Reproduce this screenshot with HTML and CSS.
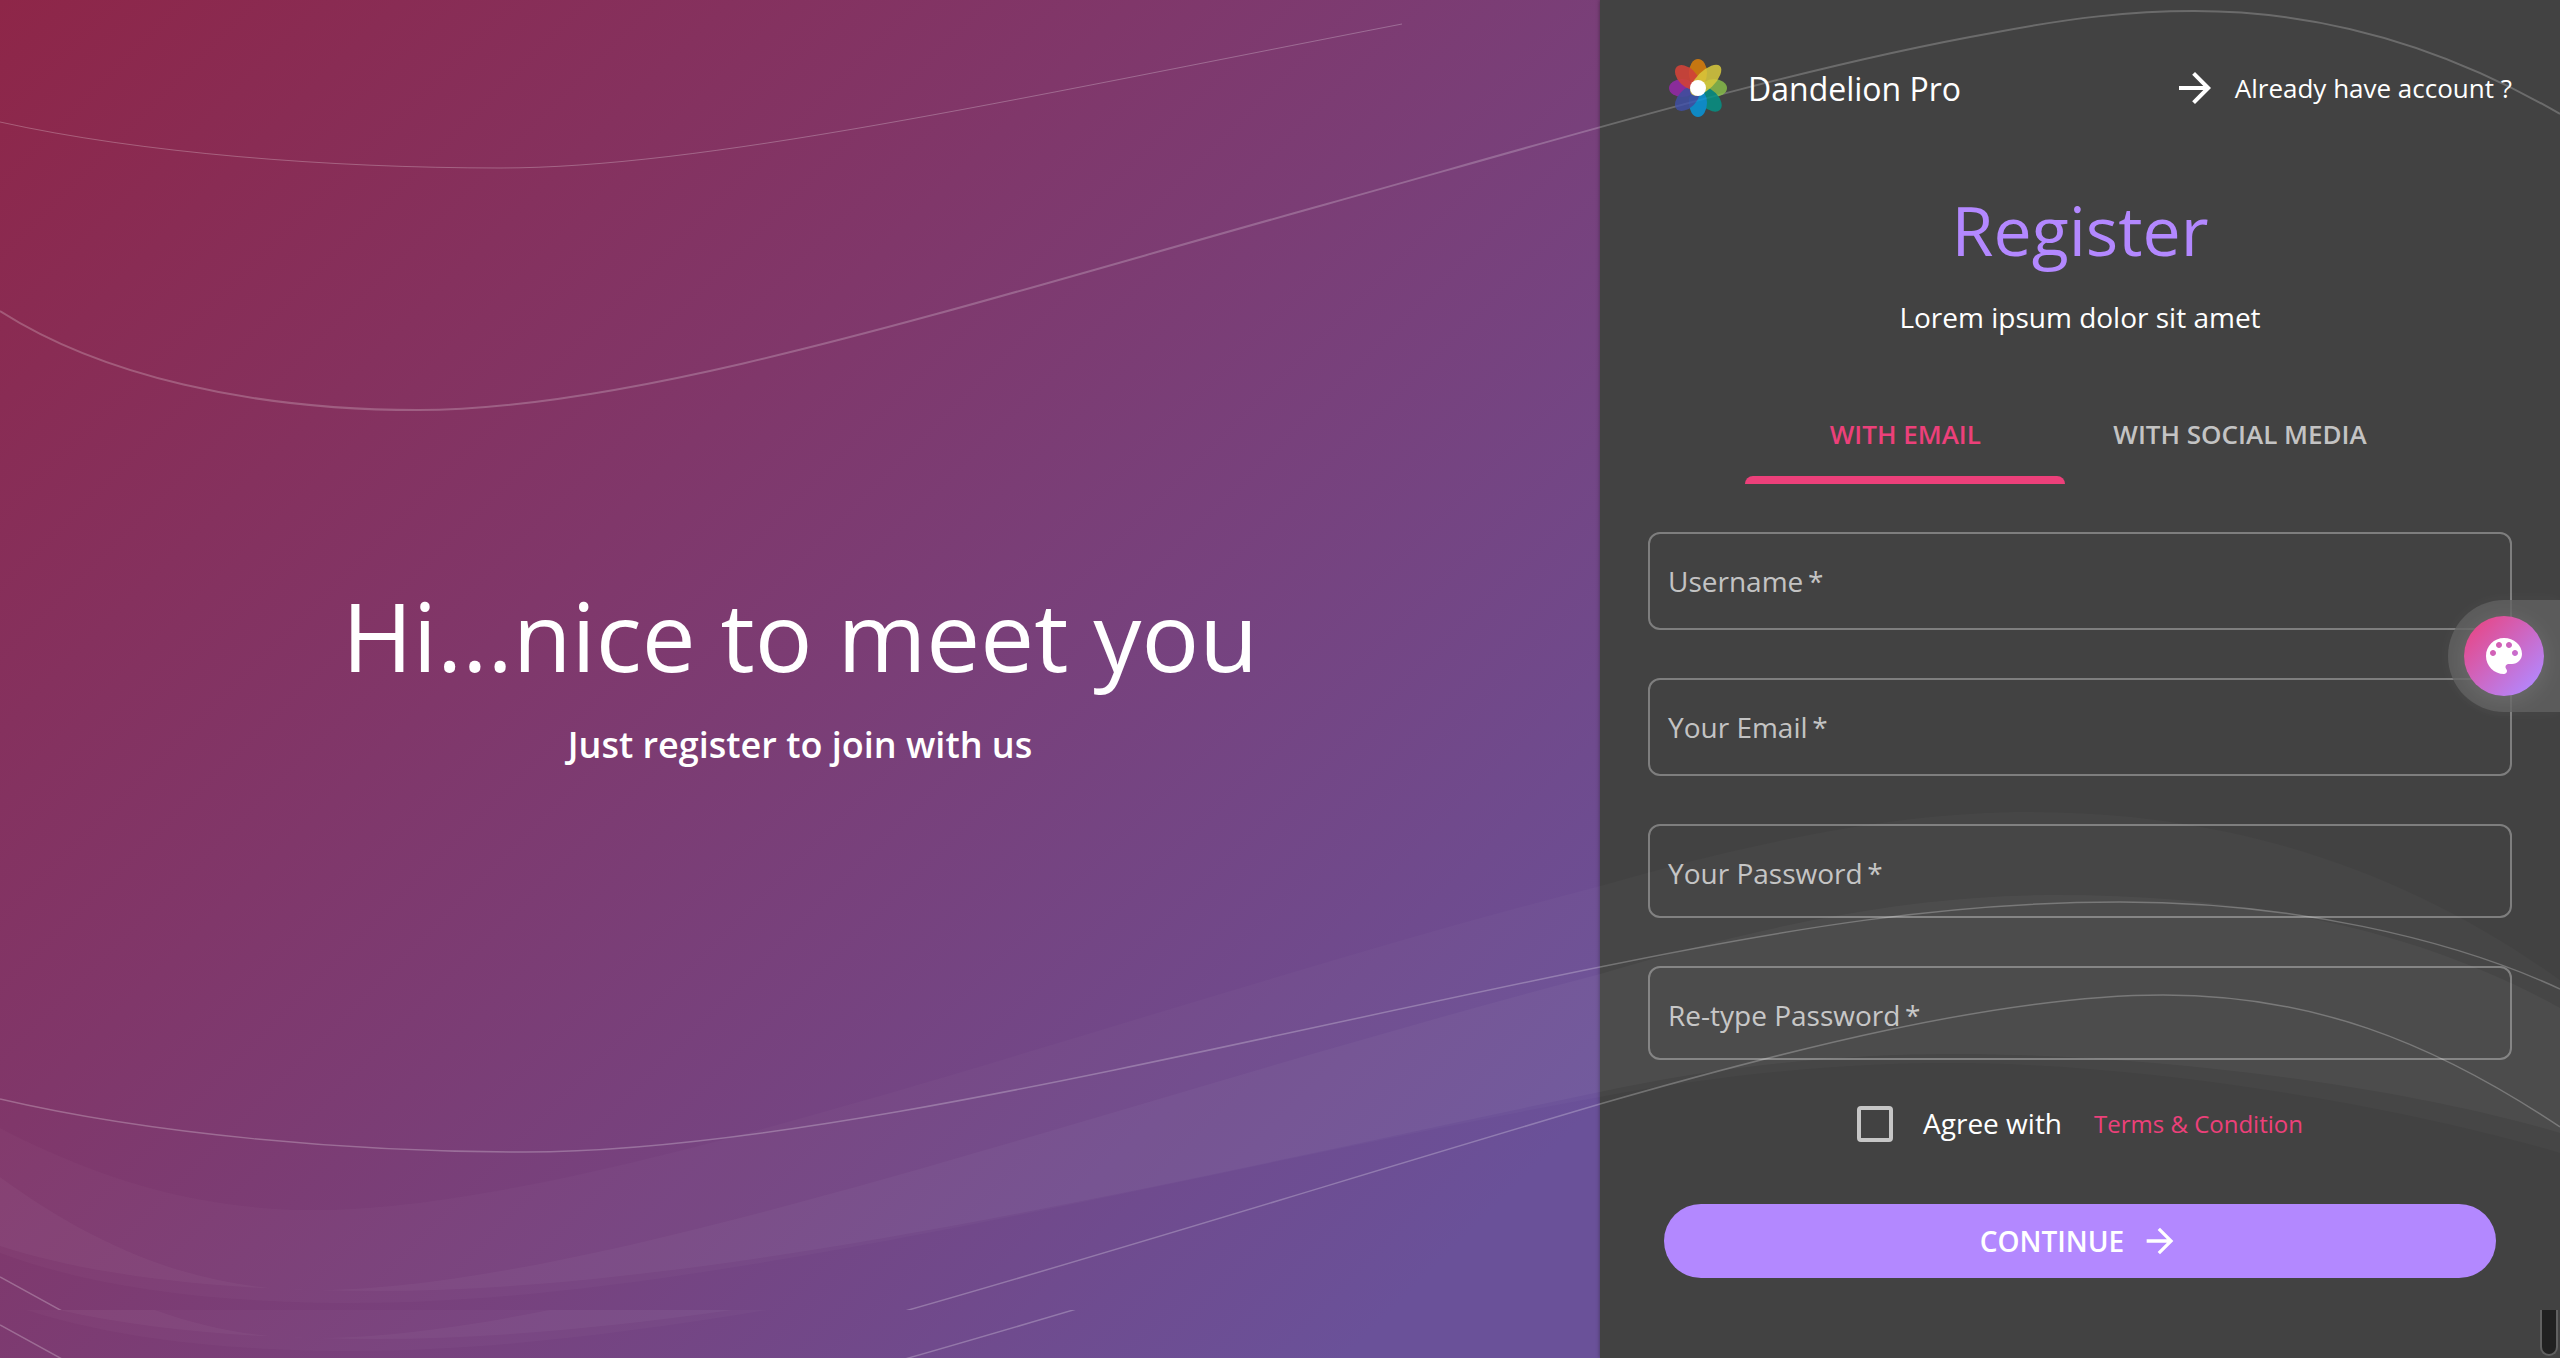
FILE: index.html
```html
<!DOCTYPE html>
<html lang="en">
<head>
    <meta charset="UTF-8">
    <meta name="viewport" content="width=device-width, initial-scale=1.0">
    <title>Dandelion Pro - Register</title>
    <link rel="stylesheet" href="styles.css">
</head>
<body>

    <div class="page">
        <!-- Background waves -->
        <svg class="waves" viewBox="0 0 2560 1358" preserveAspectRatio="none" aria-hidden="true">
            <defs>
                <clipPath id="clip-main"><rect width="2560" height="1310"/></clipPath>
                <clipPath id="clip-tail"><rect y="1262" width="2560" height="48"/></clipPath>
                <g id="wave-shapes">
                    <path class="band-soft" d="M0 1128 C100 1180 200 1210 314 1210 C600 1210 1120 1010 1600 886 C1760 840 1900 812 2029 812 C2250 812 2420 880 2560 980 L2560 1153 C2380 1100 2130 1063 1949 1063 C1840 1063 1720 1075 1600 1097 C1180 1174 700 1303 357 1303 C220 1303 100 1290 0 1253 Z"/>
                    <path class="band" d="M0 1177 C100 1250 200 1290 314 1290 C600 1290 1120 1099 1600 974 C1780 920 1920 895 2059 895 C2250 895 2420 930 2560 1008 L2560 1133 C2380 1080 2130 1054 1955 1054 C1840 1054 1720 1066 1600 1092 C1180 1180 720 1291 378 1291 C230 1291 100 1278 0 1246 Z"/>
                    <path class="line" d="M0 1099 C150 1134 350 1152 525 1152 C800 1152 1220 1044 1600 967 C1790 928 1950 902 2120 902 C2290 902 2450 938 2560 989"/>
                    <path class="line" d="M0 1277 L62 1311 M905 1311 C1130 1247 1350 1178 1600 1104 C1780 1052 2000 995 2163 995 C2310 995 2430 1040 2560 1127"/>
                </g>
            </defs>
            <path class="line line-thin" d="M0 122 C140 153 330 168 500 168 C700 168 1000 102 1402 24"/>
            <path class="line line-bold" d="M0 311 C100 375 250 410 418 410 C640 410 960 306 1327 204 C1580 133 1800 67 1992 33 C2070 18 2130 11 2194 11 C2330 11 2450 50 2560 114"/>
            <g clip-path="url(#clip-main)"><use href="#wave-shapes"/></g>
            <g transform="translate(0 48)"><g clip-path="url(#clip-tail)"><use href="#wave-shapes"/></g></g>
        </svg>

        <section class="welcome">
            <h1>Hi...nice to meet you</h1>
            <p>Just register to join with us</p>
        </section>

        <main class="panel">
            <header class="topbar">
                <a class="brand" href="#">
                    <svg class="logo" viewBox="-30 -30 60 60" aria-hidden="true">
                        <g opacity="0.8">
                            <ellipse cx="16" cy="0" rx="13" ry="9" fill="#8bc34a"/>
                            <ellipse cx="16" cy="0" rx="15" ry="9" fill="#009688" transform="rotate(45)"/>
                            <ellipse cx="15" cy="0" rx="14" ry="9" fill="#039be5" transform="rotate(90)"/>
                            <ellipse cx="-16" cy="0" rx="13" ry="9" fill="#9c27b0"/>
                            <ellipse cx="15" cy="0" rx="15" ry="9" fill="#3f51b5" fill-opacity="0.9" transform="rotate(135)"/>
                            <ellipse cx="15" cy="0" rx="14" ry="9" fill="#fb8c00" fill-opacity="0.9" transform="rotate(270)"/>
                            <ellipse cx="15" cy="0" rx="15" ry="9" fill="#f44336" fill-opacity="0.9" transform="rotate(225)"/>
                            <ellipse cx="11" cy="0" rx="20" ry="9" fill="#ffeb3b" fill-opacity="0.85" transform="rotate(315)"/>
                        </g>
                        <circle r="8" fill="#fff"/>
                    </svg>
                    Dandelion Pro
                </a>
                <a class="login-link" href="#">
                    <svg class="icon" viewBox="0 0 24 24" aria-hidden="true"><path d="M12 4l-1.41 1.41L16.17 11H4v2h12.17l-5.58 5.59L12 20l8-8z"/></svg>
                    Already have account ?
                </a>
            </header>

            <h2>Register</h2>
            <p class="subtitle">Lorem ipsum dolor sit amet</p>

            <div class="tabs" role="tablist">
                <button class="tab active" type="button" role="tab" aria-selected="true">WITH EMAIL</button>
                <button class="tab" type="button" role="tab" aria-selected="false">WITH SOCIAL MEDIA</button>
            </div>

            <form class="form">
                <div class="field">
                    <input type="text" id="username" placeholder=" " required>
                    <label for="username">Username&thinsp;*</label>
                </div>
                <div class="field">
                    <input type="email" id="email" placeholder=" " required>
                    <label for="email">Your Email&thinsp;*</label>
                </div>
                <div class="field field-password">
                    <input type="password" id="password" placeholder=" " required>
                    <label for="password">Your Password&thinsp;*</label>
                </div>
                <div class="field field-password">
                    <input type="password" id="password-repeat" placeholder=" " required>
                    <label for="password-repeat">Re-type Password&thinsp;*</label>
                </div>

                <div class="agree">
                    <input type="checkbox" id="agree">
                    <label for="agree">Agree with</label>
                    <a href="#">Terms &amp; Condition</a>
                </div>

                <button class="submit" type="submit">
                    CONTINUE
                    <svg class="icon" viewBox="0 0 24 24" aria-hidden="true"><path d="M12 4l-1.41 1.41L16.17 11H4v2h12.17l-5.58 5.59L12 20l8-8z"/></svg>
                </button>
            </form>
        </main>

        <!-- Theme switcher stuck to the right edge -->
        <div class="theme-toggle">
            <button type="button" aria-label="Change theme">
                <svg class="icon" viewBox="0 0 24 24" aria-hidden="true"><path d="M12 3c-4.97 0-9 4.03-9 9s4.03 9 9 9c.83 0 1.5-.67 1.5-1.5 0-.39-.15-.74-.39-1.01-.23-.26-.38-.61-.38-.99 0-.83.67-1.5 1.5-1.5H16c2.76 0 5-2.24 5-5 0-4.42-4.03-8-9-8zm-5.5 9c-.83 0-1.5-.67-1.5-1.5S5.67 9 6.5 9 8 9.67 8 10.5 7.33 12 6.5 12zm3-4C8.67 8 8 7.33 8 6.5S8.67 5 9.5 5s1.5.67 1.5 1.5S10.33 8 9.5 8zm5 0c-.83 0-1.5-.67-1.5-1.5S13.67 5 14.5 5s1.5.67 1.5 1.5S15.33 8 14.5 8zm3 4c-.83 0-1.5-.67-1.5-1.5S16.67 9 17.5 9s1.5.67 1.5 1.5-.67 1.5-1.5 1.5z"/></svg>
            </button>
        </div>

        <div class="scroll-thumb"></div>
    </div>

</body>
</html>
```
FILE: styles.css
```css
* {
    margin: 0;
    padding: 0;
    box-sizing: border-box;
}

body {
    font-family: 'Open Sans', sans-serif;
    font-size: 28px;
    color: #fff;
    background-color: #424242;
}

a {
    color: inherit;
    text-decoration: none;
}

button,
input {
    font: inherit;
    color: inherit;
    border: none;
    background: none;
}

button {
    cursor: pointer;
}

.icon {
    width: 48px;
    height: 48px;
    fill: currentColor;
}

.page {
    position: relative;
    display: grid;
    grid-template-columns: 5fr 3fr;
    min-height: 100vh;
    overflow: hidden;
    background: linear-gradient(135deg, #8e2648 0%, #80376a 29%, #6a5199 69%);
}

/* Waves, drawn above the panel background and below the content */
.waves {
    position: absolute;
    top: 0;
    left: 0;
    z-index: 1;
    width: 100%;
    height: 100%;
    pointer-events: none;
}

.band-soft {
    fill: rgba(255, 255, 255, 0.025);
}

.band {
    fill: rgba(255, 255, 255, 0.035);
}

.line {
    fill: none;
    stroke: rgba(255, 255, 255, 0.25);
    stroke-width: 1.5;
}

.line-thin {
    stroke-width: 1;
}

.line-bold {
    stroke-width: 2;
    stroke: rgba(255, 255, 255, 0.22);
}

/* Left side */
.welcome {
    display: flex;
    flex-direction: column;
    align-items: center;
    justify-content: center;
    gap: 24px;
    padding-bottom: 4px;
    text-align: center;
}

.welcome > * {
    position: relative;
    z-index: 2;
}

.welcome h1 {
    font-size: 96px;
    font-weight: 400;
    line-height: 112px;
}

.welcome p {
    font-size: 36px;
    font-weight: 600;
    line-height: 60px;
}

/* Right side */
.panel {
    padding: 48px;
    background-color: #424242;
    box-shadow: 0 0 4px rgba(0, 0, 0, 0.4);
}

.panel > * {
    position: relative;
    z-index: 2;
}

.topbar {
    display: flex;
    align-items: center;
    justify-content: space-between;
    height: 80px;
    padding-left: 20px;
}

.brand {
    display: flex;
    align-items: center;
    gap: 20px;
    font-size: 32px;
}

.logo {
    width: 60px;
    height: 60px;
}

.login-link {
    display: flex;
    align-items: center;
    gap: 16px;
    font-size: 26px;
}

.panel h2 {
    margin-top: 64px;
    color: #b388ff;
    font-size: 68px;
    font-weight: 400;
    line-height: 76px;
    text-align: center;
}

.subtitle {
    margin-top: 28px;
    line-height: 42px;
    text-align: center;
}

.tabs {
    display: flex;
    justify-content: center;
    margin: 50px 0 48px;
}

.tab {
    min-width: 320px;
    height: 96px;
    padding: 0 48px 4px;
    color: rgba(255, 255, 255, 0.7);
    font-size: 26px;
    font-weight: 600;
}

.tab.active {
    position: relative;
    color: #ec407a;
}

.tab.active::after {
    content: '';
    position: absolute;
    left: 0;
    right: 0;
    bottom: 0;
    height: 8px;
    border-radius: 8px 8px 0 0;
    background-color: #ec407a;
}

.form {
    display: flex;
    flex-direction: column;
    gap: 48px;
}

.field {
    position: relative;
    height: 98px;
}

.field-password {
    height: 94px;
}

.field input {
    width: 100%;
    height: 100%;
    padding: 0 20px;
    border: 2px solid rgba(255, 255, 255, 0.32);
    border-radius: 12px;
    outline: none;
}

.field label {
    position: absolute;
    top: 0;
    left: 20px;
    line-height: 98px;
    color: rgba(255, 255, 255, 0.7);
    pointer-events: none;
}

.field input:focus {
    border-color: #b388ff;
}

.field input:not(:placeholder-shown) + label {
    display: none;
}

.agree {
    display: flex;
    align-items: center;
    justify-content: center;
    height: 32px;
}

.agree input {
    appearance: none;
    width: 36px;
    height: 36px;
    margin-right: 30px;
    border: 4px solid rgba(255, 255, 255, 0.7);
    border-radius: 4px;
}

.agree input:checked {
    background-color: #b388ff;
}

.agree label,
.agree a {
    padding-bottom: 2px;
}

.agree a {
    margin-left: 32px;
    color: #ec407a;
    font-size: 24px;
}

.submit {
    display: flex;
    align-items: center;
    justify-content: center;
    gap: 16px;
    height: 74px;
    margin: 16px;
    border-radius: 37px;
    background-color: #b388ff;
    font-weight: 600;
}

.submit .icon {
    width: 40px;
    height: 40px;
}

.theme-toggle {
    position: absolute;
    top: 600px;
    right: 0;
    z-index: 3;
    padding: 16px;
    border-radius: 56px 0 0 56px;
    background-color: rgba(97, 97, 97, 0.8);
    box-shadow: 0 0 16px rgba(255, 255, 255, 0.04);
}

.theme-toggle button {
    display: flex;
    align-items: center;
    justify-content: center;
    width: 80px;
    height: 80px;
    border-radius: 50%;
    background: linear-gradient(135deg, #ec407a 0%, #b388ff 90%);
    box-shadow: 0 4px 24px rgba(255, 255, 255, 0.12);
}

.scroll-thumb {
    position: absolute;
    right: 2px;
    bottom: 2px;
    z-index: 3;
    width: 18px;
    height: 46px;
    border: 2px solid #616161;
    border-top: none;
    border-radius: 0 0 9px 9px;
    background-color: #212121;
}
```
